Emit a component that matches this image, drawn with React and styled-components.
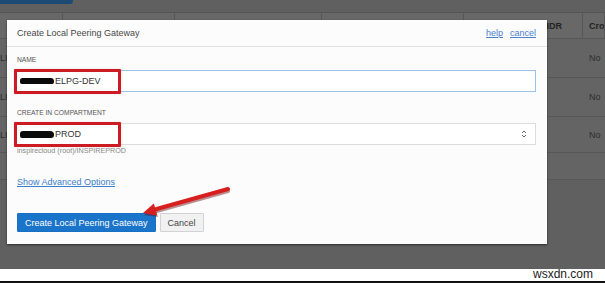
import styled, { createGlobalStyle } from "styled-components";

const GlobalStyle = createGlobalStyle`
  html, body {
    margin: 0;
    padding: 0;
    background: #ffffff;
    font-family: "Liberation Sans", Arial, sans-serif;
  }
`;

const Page = styled.div`
  width: 605px;
  height: 283px;
  display: flex;
  flex-direction: column;
  overflow: hidden;
`;

const Backdrop = styled.div`
  position: relative;
  height: 269px;
  background: #606060;
  overflow: hidden;
`;

const TopBar = styled.div`
  height: 12px;
  display: flex;
  align-items: flex-start;
`;

const BgButton = styled.div`
  width: 73px;
  height: 4px;
  background: #1d4a72;
  border-radius: 0 0 3px 0;
`;

const Table = styled.div`
  display: grid;
  grid-template-columns: 63px 112px 147px 142px 119px 1fr;
  grid-template-rows: 26px 39px 39px 36px 27px;
  border-top: 1px solid #555555;
`;

const HeadCell = styled.div`
  background: #686868;
  border-right: 1px solid #575757;
  border-bottom: 1px solid #575757;
  display: flex;
  align-items: center;
  justify-content: ${(p) => (p.$end ? "flex-end" : "flex-start")};
  padding: 0 ${(p) => (p.$end ? "20px" : "6px")} 0 6px;
  font-size: 9px;
  font-weight: bold;
  color: #232323;
  white-space: nowrap;
  overflow: hidden;
`;

const Cell = styled.div`
  background: #646464;
  border-bottom: 1px solid #575757;
  display: flex;
  align-items: center;
  padding-left: ${(p) => p.$pad || "6px"};
  font-size: 9px;
  color: #2e2e2e;
  white-space: nowrap;
  overflow: hidden;
`;

const Modal = styled.div`
  position: absolute;
  left: 7px;
  top: 20px;
  width: 540px;
  height: 224px;
  background: #fcfcfc;
  box-shadow: 0 1px 2px rgba(0, 0, 0, 0.55);
  display: flex;
  flex-direction: column;
`;

const ModalHeader = styled.div`
  height: 26px;
  border-bottom: 1px solid #e1e1e1;
  padding: 0 11px 0 10px;
  display: flex;
  align-items: center;
  justify-content: space-between;
`;

const Title = styled.div`
  font-size: 9px;
  color: #474747;
`;

const Links = styled.div`
  display: flex;
  gap: 7px;
`;

const Link = styled.a`
  font-size: 9px;
  color: #4a80cf;
  text-decoration: underline;
  cursor: pointer;
`;

const ModalBody = styled.div`
  padding: 0 11px 0 8px;
  display: flex;
  flex-direction: column;
`;

const Label = styled.div`
  margin: ${(p) => p.$top} 0 6px 2px;
  font-size: 6.7px;
  line-height: 8px;
  color: #555555;
  text-transform: uppercase;
`;

const Field = styled.div`
  position: relative;
  height: 22px;
  box-sizing: border-box;
  border: 1px solid ${(p) => (p.$focused ? "#9cc2e6" : "#dcdcdc")};
  background: #ffffff;
  display: flex;
  align-items: center;
  padding: 0 8px 0 4px;
  font-size: 9px;
  color: #333333;
`;

/* marker scribble over the hidden part of the value */
const Scribble = styled.span`
  display: inline-block;
  width: ${(p) => p.$w};
  height: ${(p) => p.$h || "6px"};
  background: #0a0a0a;
  border-radius: 3px 4px 3px 2px;
  margin-right: 1px;
`;

const Highlight = styled.div`
  position: absolute;
  left: -2px;
  top: -2px;
  width: 107px;
  height: 25px;
  box-sizing: border-box;
  border: 3px solid #cc1b22;
  border-radius: 1px;
  box-shadow: 0 0 1px rgba(120, 0, 0, 0.4);
`;

const Chevrons = styled.svg`
  margin-left: auto;
`;

const Hint = styled.div`
  margin: 2px 0 0 2px;
  font-size: 7.2px;
  line-height: 8px;
  color: #888888;
`;

const Advanced = styled.a`
  margin: 22px 0 0 2px;
  font-size: 9px;
  line-height: 11px;
  color: #3b80c9;
  text-decoration: underline;
  align-self: flex-start;
`;

const Actions = styled.div`
  margin: 25px 0 0 2px;
  display: flex;
  gap: 4px;
`;

const Button = styled.button`
  height: 19px;
  padding: 0 7px;
  font-family: "Liberation Sans", Arial, sans-serif;
  font-size: 9px;
  border-radius: 1px;
  border: 1px solid ${(p) => (p.$primary ? "#1670c4" : "#d2d2d2")};
  background: ${(p) => (p.$primary ? "#1a74c9" : "#f1f1f1")};
  color: ${(p) => (p.$primary ? "#ffffff" : "#444444")};
  cursor: pointer;
`;

const Arrow = styled.svg`
  position: absolute;
  left: 0;
  top: 0;
  pointer-events: none;
`;

const Footer = styled.div`
  height: 12px;
  background: #ffffff;
  border-bottom: 2px solid #111111;
  display: flex;
  justify-content: flex-end;
  align-items: flex-start;
  padding-right: 12px;
`;

const Watermark = styled.span`
  font-size: 12px;
  line-height: 11px;
  color: #1c1c1c;
`;

// only the parts of the table that peek out around the dialog
const headers = ["", "", "", "", "CIDR", "Cro"];
const rows = [
  ["LI", "", "", "", "", "No"],
  ["LI", "", "", "", "", "No"],
  ["LI", "", "", "", "", "No"],
  ["", "", "", "", "", ""],
];

const App = () => {
  return (
    <Page>
      <GlobalStyle />
      <Backdrop>
        <TopBar>
          <BgButton />
        </TopBar>
        <Table>
          {headers.map((h, i) => (
            <HeadCell key={i} $end={i === 4}>
              {h}
            </HeadCell>
          ))}
          {rows.map((r, ri) =>
            r.map((c, ci) => (
              <Cell key={`${ri}-${ci}`} $pad={ci === 0 ? "0px" : "6px"}>
                {c}
              </Cell>
            ))
          )}
        </Table>

        <Modal>
          <ModalHeader>
            <Title>Create Local Peering Gateway</Title>
            <Links>
              <Link>help</Link>
              <Link>cancel</Link>
            </Links>
          </ModalHeader>
          <ModalBody>
            <Label $top="9px">Name</Label>
            <Field $focused>
              <Scribble $w="34px" />ELPG-DEV
              <Highlight />
            </Field>
            <Label $top="17px">Create in compartment</Label>
            <Field>
              <Scribble $w="34px" $h="7px" />PROD
              <Chevrons width="6" height="10" viewBox="0 0 6 10">
                <path d="M1 4 L3 2 L5 4 M1 6 L3 8 L5 6" fill="none" stroke="#666" strokeWidth="1" />
              </Chevrons>
              <Highlight />
            </Field>
            <Hint>inspirecloud (root)/INSPIREPROD</Hint>
            <Advanced>Show Advanced Options</Advanced>
            <Actions>
              <Button $primary>Create Local Peering Gateway</Button>
              <Button>Cancel</Button>
            </Actions>
          </ModalBody>
        </Modal>

        <Arrow width="605" height="269" viewBox="0 0 605 269">
          <line x1="228" y1="191" x2="153" y2="212" stroke="#6b0d0d" strokeWidth="4" strokeLinecap="round" opacity="0.45" />
          <polygon points="144,215 154,205 158,217" fill="#6b0d0d" opacity="0.45" />
          <line x1="228" y1="189" x2="153" y2="210" stroke="#d81f1f" strokeWidth="4" strokeLinecap="round" />
          <polygon points="143,213 153.8,203.5 157.2,215.5" fill="#d81f1f" />
        </Arrow>
      </Backdrop>
      <Footer>
        <Watermark>wsxdn.com</Watermark>
      </Footer>
    </Page>
  );
};

export default App;
